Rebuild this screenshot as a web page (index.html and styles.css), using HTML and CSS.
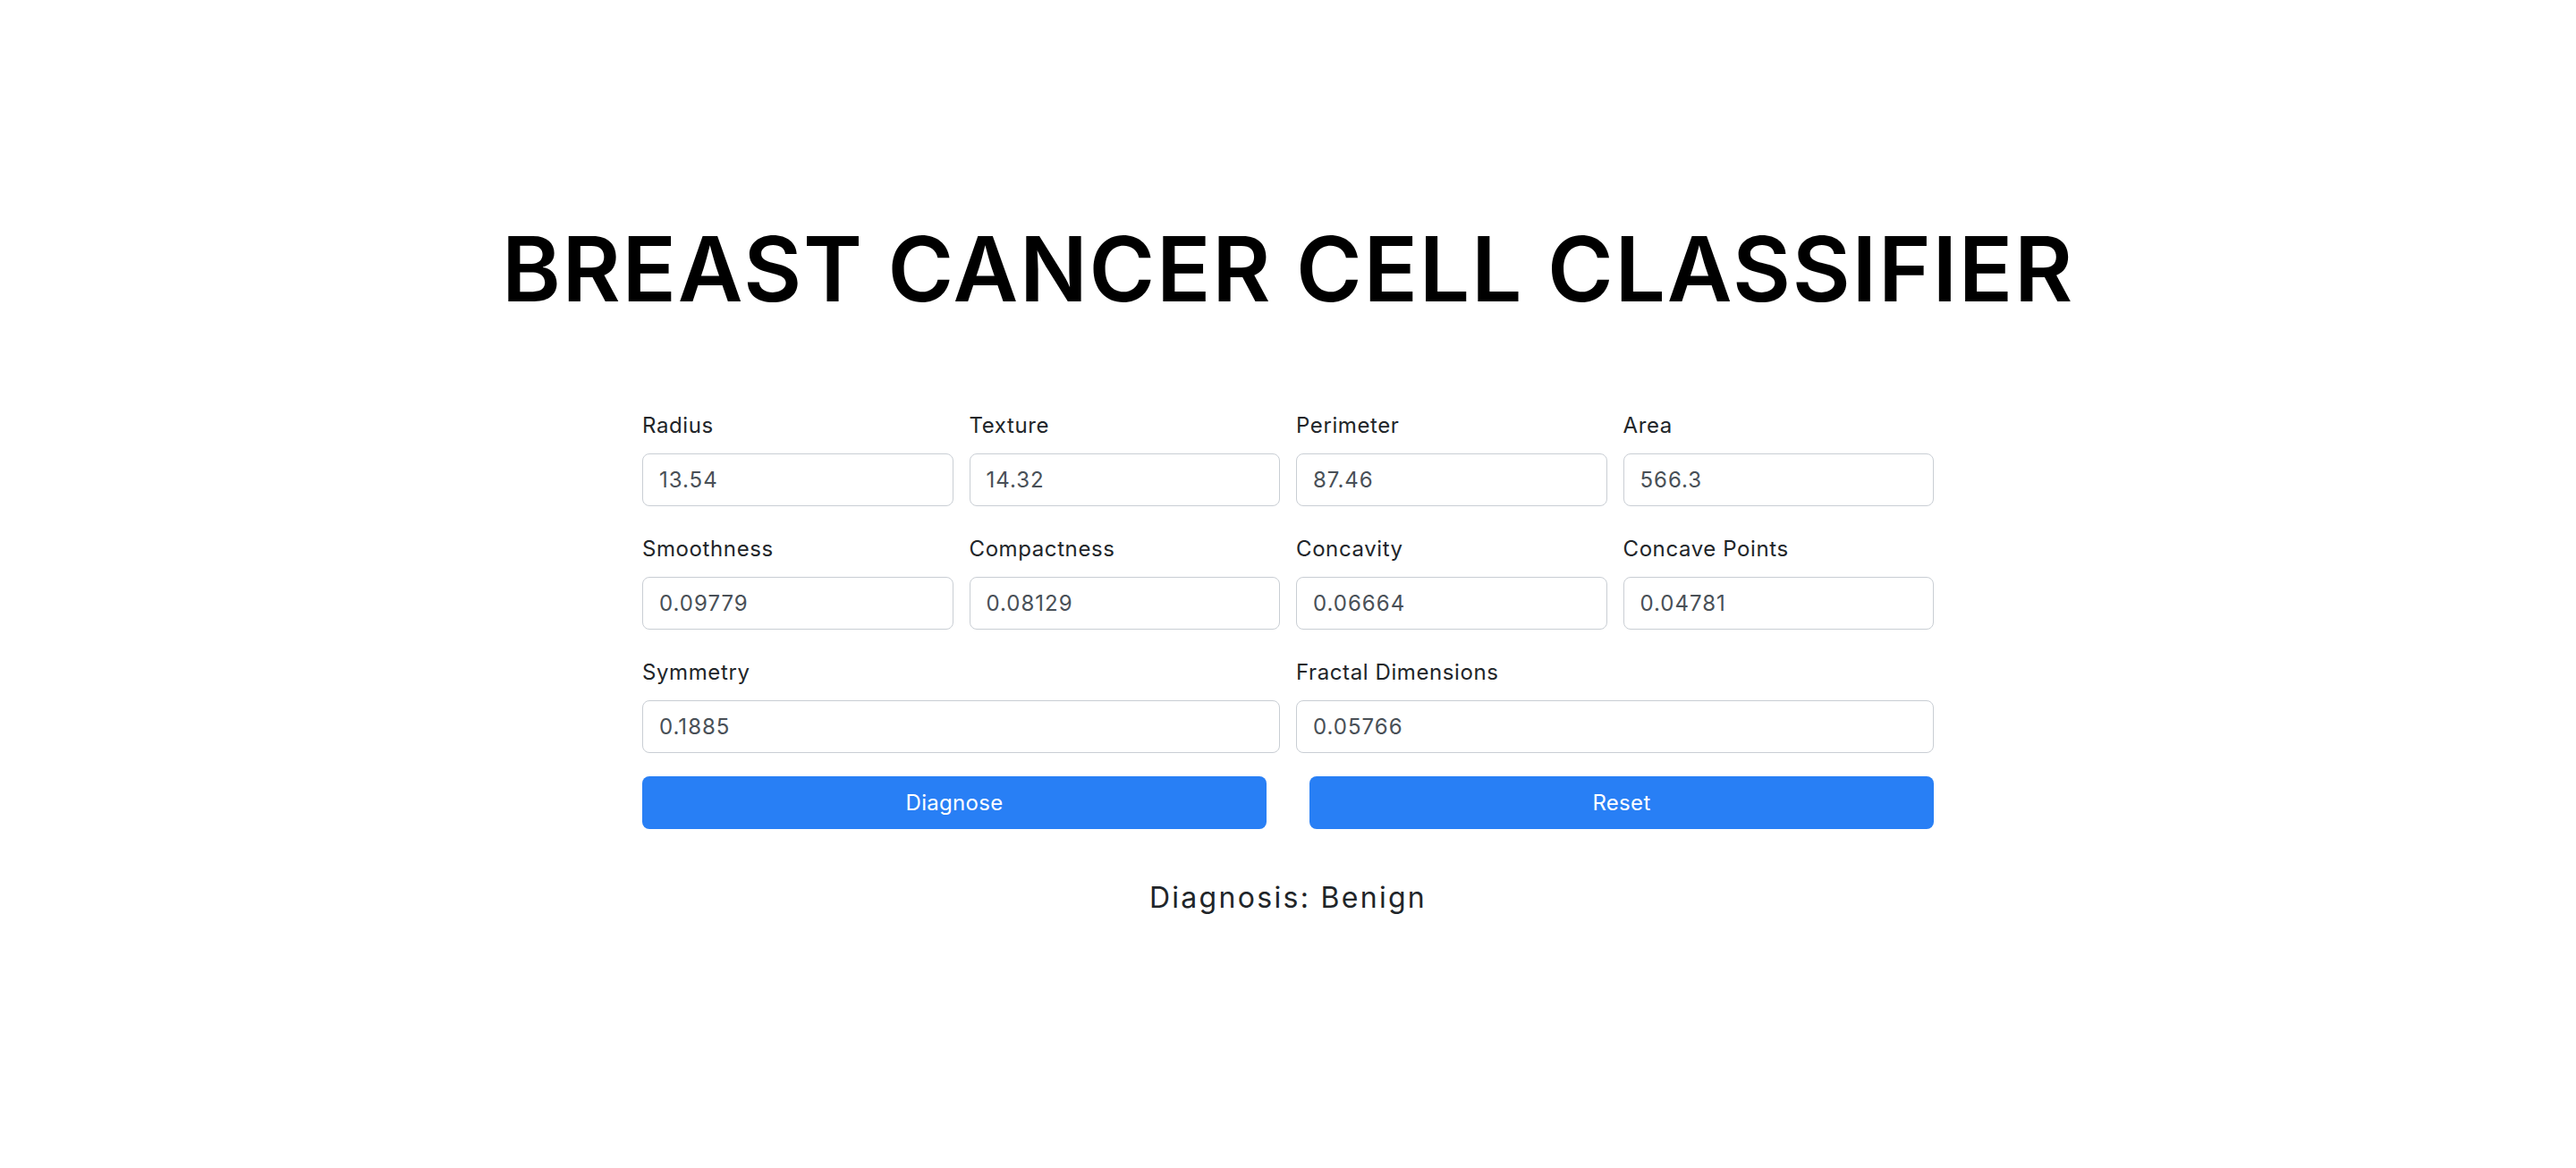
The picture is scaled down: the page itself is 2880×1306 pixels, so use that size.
FILE: index.html
```html
<!DOCTYPE html>
<html lang="en">
<head>
<meta charset="utf-8">
<title>Breast Cancer Cell Classifier</title>
<link rel="stylesheet" href="styles.css">
</head>
<body>
<main class="page">
  <h1 class="title">BREAST CANCER CELL CLASSIFIER</h1>
  <form class="form">
    <div class="fields">
      <div class="field"><label class="label">Radius</label><input class="input" value="13.54"></div>
      <div class="field"><label class="label">Texture</label><input class="input" value="14.32"></div>
      <div class="field"><label class="label">Perimeter</label><input class="input" value="87.46"></div>
      <div class="field"><label class="label">Area</label><input class="input" value="566.3"></div>
      <div class="field"><label class="label">Smoothness</label><input class="input" value="0.09779"></div>
      <div class="field"><label class="label">Compactness</label><input class="input" value="0.08129"></div>
      <div class="field"><label class="label">Concavity</label><input class="input" value="0.06664"></div>
      <div class="field"><label class="label">Concave Points</label><input class="input" value="0.04781"></div>
      <div class="field wide"><label class="label">Symmetry</label><input class="input" value="0.1885"></div>
      <div class="field wide"><label class="label">Fractal Dimensions</label><input class="input" value="0.05766"></div>
    </div>
    <div class="actions">
      <button type="button" class="btn">Diagnose</button>
      <button type="button" class="btn">Reset</button>
    </div>
  </form>
  <p class="result">Diagnosis: Benign</p>
</main>
</body>
</html>
```
FILE: styles.css
```css
* { box-sizing: border-box; }
html, body { margin: 0; padding: 0; background: #fff; }
body {
  font-family: Inter, "Noto Sans", sans-serif;
  color: #212529;
  font-size: 24px;
}
.page {
  padding-top: 241px;
  display: flex;
  flex-direction: column;
  align-items: center;
}
.title {
  margin: 0;
  font-size: 100px;
  line-height: 120px;
  font-weight: 600;
  color: #000;
  letter-spacing: 1.7px;
  text-align: center;
}
.form {
  width: 1444px;
  margin-top: 97px;
}
.fields {
  display: grid;
  grid-template-columns: repeat(4, minmax(0, 1fr));
  column-gap: 18px;
  row-gap: 30px;
}
.field {
  display: flex;
  flex-direction: column;
  min-width: 0;
}
.wide { grid-column: span 2; }
.label {
  font-size: 24px;
  line-height: 36px;
  letter-spacing: 0.6px;
  margin-bottom: 13px;
  color: #212529;
}
.input {
  width: 100%;
  min-width: 0;
  height: 59px;
  font-family: Inter, "Noto Sans", sans-serif;
  font-size: 24px;
  letter-spacing: 1px;
  color: #495057;
  padding: 0 18px;
  border: 1.5px solid #c9ced4;
  border-radius: 8px;
  background: #fff;
  outline: none;
}
.actions {
  display: grid;
  grid-template-columns: minmax(0, 1fr) minmax(0, 1fr);
  column-gap: 48px;
  margin-top: 26px;
}
.btn {
  height: 59px;
  border: none;
  border-radius: 8px;
  background: #287ff5;
  color: #fff;
  font-family: Inter, "Noto Sans", sans-serif;
  font-size: 24px;
  letter-spacing: 0.3px;
}
.result {
  margin: 53px 0 0;
  font-size: 32px;
  line-height: 48px;
  letter-spacing: 2.3px;
  color: #212529;
}
```
